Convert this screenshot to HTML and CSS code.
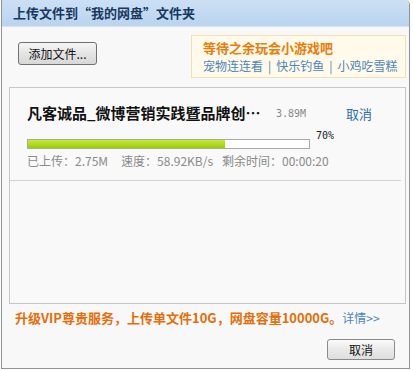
FILE: index.html
```html
<!DOCTYPE html>
<html lang="zh-CN">
<head>
<meta charset="utf-8">
<title>上传文件</title>
<link rel="stylesheet" href="styles.css">
</head>
<body>
<div class="dialog">
  <div class="titlebar">上传文件到“我的网盘”文件夹</div>
  <div class="content">
    <div class="top">
      <button class="btn btn-add">添加文件...</button>
      <div class="games">
        <div class="games-title">等待之余玩会小游戏吧</div>
        <div class="games-links"><a>宠物连连看</a><span class="sep">|</span><a>快乐钓鱼</a><span class="sep">|</span><a>小鸡吃雪糕</a></div>
      </div>
    </div>
    <div class="panel">
      <div class="item">
        <div class="row-head">
          <div class="fname">凡客诚品_微博营销实践暨品牌创…</div>
          <div class="fsize">3.89M</div>
          <a class="cancel-link">取消</a>
        </div>
        <div class="row-bar">
          <div class="bar"><div class="fill" style="width:70%"></div></div>
          <div class="pct">70%</div>
        </div>
        <div class="stats"><span>已上传：2.75M</span><span>速度：58.92KB/s</span><span>剩余时间：00:00:20</span></div>
      </div>
    </div>
    <div class="promo">升级VIP尊贵服务，上传单文件10G，网盘容量10000G。<a class="more">详情&gt;&gt;</a></div>
    <div class="footer">
      <button class="btn btn-cancel">取消</button>
    </div>
  </div>
</div>
</body>
</html>
```
FILE: styles.css
```css
html, body {
  margin: 0;
  padding: 0;
  background: #ffffff;
}
body {
  font-family: "Noto Sans CJK SC", "Liberation Sans", sans-serif;
  font-size: 12px;
  color: #333;
}
.dialog {
  margin-left: 1px;
  width: 409px;
  height: 369px;
  box-sizing: border-box;
  border: 1px solid #8f9297;
  border-top: none;
  border-top-right-radius: 5px;
  background: #f8f8f8;
  display: flex;
  flex-direction: column;
}
.titlebar {
  height: 27px;
  box-sizing: border-box;
  padding-left: 11px;
  display: flex;
  align-items: center;
  background: linear-gradient(#cbe0f5, #bad4ef);
  border-top-right-radius: 5px;
  border-bottom: 1px solid #d9e3ee;
  font-size: 13px;
  font-weight: bold;
  color: #17375f;
  line-height: 16px;
}
.content {
  padding: 0 3px 0 7px;
  display: flex;
  flex-direction: column;
}
.top {
  display: flex;
  justify-content: space-between;
  align-items: flex-start;
  padding-top: 8px;
}
.btn {
  font-family: "Noto Sans CJK SC", "Liberation Sans", sans-serif;
  font-size: 12px;
  color: #111;
  border: 1px solid #707070;
  border-radius: 3px;
  background: linear-gradient(#f6f6f6, #e4e4e4 50%, #d8d8d8);
  padding: 0;
  line-height: 16px;
}
.btn-add {
  margin: 7px 0 0 9px;
  width: 79px;
  height: 23px;
}
.games {
  width: 215px;
  height: 43px;
  box-sizing: border-box;
  background: #fffae9;
  border: 1px solid #f0e0b6;
  padding: 3px 0 0 11px;
}
.games-title {
  font-size: 13px;
  font-weight: bold;
  color: #e87d0c;
  line-height: 18px;
}
.games-links {
  line-height: 18px;
  font-size: 12px;
  color: #4b86bb;
  white-space: nowrap;
}
.games-links a {
  color: #4b86bb;
}
.sep {
  margin: 0 5px;
  color: #4b86bb;
}
.panel {
  margin-top: 9px;
  height: 217px;
  box-sizing: border-box;
  border: 1px solid #c6c6c6;
  background: #f9f9f9;
}
.item {
  padding: 16px 0 11px 17px;
  border-bottom: 1px solid #d2d2d2;
  margin: 0 4px 0 0;
}
.row-head {
  display: flex;
  align-items: center;
  height: 18px;
}
.fname {
  width: 249px;
  font-size: 15px;
  font-weight: bold;
  color: #111;
  line-height: 18px;
  white-space: nowrap;
}
.fsize {
  width: 70px;
  font-family: "DejaVu Sans Mono", "Liberation Mono", monospace;
  font-size: 10px;
  color: #888;
}
.cancel-link {
  font-size: 13px;
  color: #2f6ea8;
}
.row-bar {
  display: flex;
  align-items: flex-start;
  margin-top: 17px;
}
.bar {
  width: 283px;
  height: 10px;
  box-sizing: border-box;
  border: 1px solid #a9a9a9;
  background: #fff;
}
.fill {
  height: 100%;
  background: linear-gradient(#c6ea3a, #99cc00);
}
.pct {
  margin: -9px 0 0 6px;
  font-family: "DejaVu Sans Mono", "Liberation Mono", monospace;
  font-size: 10px;
  line-height: 12px;
  color: #222;
}
.stats {
  margin-top: 4px;
  line-height: 16px;
  font-size: 12px;
  color: #8a8a8a;
  white-space: nowrap;
  display: flex;
  gap: 13px;
}
.stats span:last-child {
  margin-left: -4px;
}
.promo {
  margin: 5px 0 0 6px;
  line-height: 18px;
  font-size: 13px;
  font-weight: bold;
  color: #e46f0a;
  white-space: nowrap;
}
.more {
  font-weight: normal;
  font-size: 12px;
  color: #4b86bb;
}
.footer {
  display: flex;
  justify-content: flex-end;
  margin-top: 12px;
  padding-right: 11px;
}
.btn-cancel {
  width: 68px;
  height: 21px;
  border-color: #8a8a8a;
  background: linear-gradient(#fbfbfb, #e9e9e9 50%, #dedede);
}
```
